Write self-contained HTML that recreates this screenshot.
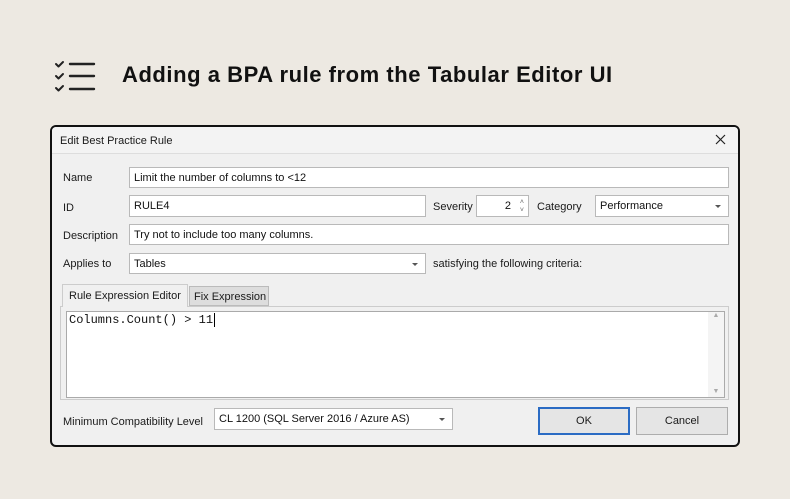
<!DOCTYPE html>
<html><head><style>
body{margin:0;width:790px;height:499px;background:#ede9e2;font-family:"Liberation Sans",sans-serif;position:relative;overflow:hidden}
.a{position:absolute}
.t{font-size:11px;color:#1a1a1a}
.in{position:absolute;background:#fff;border:1px solid #b9b9b9;box-sizing:border-box;font-size:11px;padding:0 0 0 4px;color:#111;display:flex;align-items:center}
.dd::after{content:"";position:absolute;right:7px;top:9px;border:3px solid transparent;border-top:3px solid #555}
</style></head><body>
<svg class="a" style="left:54px;top:60px" width="44" height="34" viewBox="0 0 44 34">
<g fill="none" stroke="#222" stroke-width="2" stroke-linecap="round" stroke-linejoin="round">
<path d="M2 4l2.5 2.5L9 2"/><path d="M2 16l2.5 2.5L9 14"/><path d="M2 28l2.5 2.5L9 26"/>
<path d="M16 4h24M16 16h24M16 29h24" stroke-width="2.4"/></g></svg>
<div class="a" style="left:122px;top:62px;font-size:22px;font-weight:bold;color:#111;letter-spacing:0.55px">Adding a BPA rule from the Tabular Editor UI</div>

<div class="a" style="left:50px;top:125px;width:690px;height:322px;box-sizing:border-box;border:2px solid #111;border-radius:6px;background:#f0f0f0;overflow:hidden">
<div class="a" style="left:0;top:0;width:686px;height:26px;background:#f3f3f3;border-bottom:1px solid #ddd"></div>
<div class="a t" style="left:8px;top:8px">Edit Best Practice Rule</div>
<svg class="a" style="left:663px;top:7px" width="11" height="11"><path d="M1 1L10 10M10 1L1 10" stroke="#222" stroke-width="1.2"/></svg>
</div>
<div class="a t" style="left:63px;top:172px">Name</div>
<div class="in" style="left:129px;top:167px;width:600px;height:21px">Limit the number of columns to &lt;12</div>
<div class="a t" style="left:63px;top:202px">ID</div>
<div class="in" style="left:129px;top:195px;width:297px;height:22px">RULE4</div>
<div class="a t" style="left:433px;top:201px">Severity</div>
<div class="in" style="left:476px;top:195px;width:53px;height:22px;justify-content:flex-end;padding-right:17px">2<span style="position:absolute;right:4px;top:3px;font-size:7px;line-height:8px;color:#666">˄<br>˅</span></div>
<div class="a t" style="left:537px;top:201px">Category</div>
<div class="in dd" style="left:595px;top:195px;width:134px;height:22px">Performance</div>
<div class="a t" style="left:63px;top:230px">Description</div>
<div class="in" style="left:129px;top:224px;width:600px;height:21px">Try not to include too many columns.</div>
<div class="a t" style="left:63px;top:258px">Applies to</div>
<div class="in dd" style="left:129px;top:253px;width:297px;height:21px">Tables</div>
<div class="a t" style="left:433px;top:258px">satisfying the following criteria:</div>

<div class="a" style="left:60px;top:306px;width:669px;height:94px;box-sizing:border-box;border:1px solid #ccc;background:#f0f0f0"></div>
<div class="a t" style="left:62px;top:284px;width:126px;height:23px;box-sizing:border-box;border:1px solid #ccc;border-bottom:none;background:#f0f0f0;padding:5px 0 0 6px">Rule Expression Editor</div>
<div class="a t" style="left:189px;top:286px;width:80px;height:20px;box-sizing:border-box;border:1px solid #bbb;background:#ddd;padding:4px 0 0 4px">Fix Expression</div>
<div class="a" style="left:66px;top:311px;width:659px;height:87px;box-sizing:border-box;border:1px solid #aaa;background:#fff"></div>
<div class="a" style="left:69px;top:313px;font-family:'Liberation Mono',monospace;font-size:12px;color:#111">Columns.Count() &gt; 11<span style="border-left:1px solid #000;margin-left:1px"></span></div>
<div class="a" style="left:708px;top:312px;width:16px;height:85px;background:#f4f4f4;font-size:7px;color:#aaa;text-align:center">▲<div style="position:absolute;bottom:2px;width:16px">▼</div></div>

<div class="a t" style="left:63px;top:416px">Minimum Compatibility Level</div>
<div class="in dd" style="left:214px;top:408px;width:239px;height:22px">CL 1200 (SQL Server 2016 / Azure AS)</div>
<div class="a t" style="left:538px;top:407px;width:92px;height:28px;box-sizing:border-box;border:2px solid #2b6cc4;background:#e5e5e5;text-align:center;line-height:24px">OK</div>
<div class="a t" style="left:636px;top:407px;width:92px;height:28px;box-sizing:border-box;border:1px solid #adadad;background:#e5e5e5;text-align:center;line-height:26px">Cancel</div>
</body></html>
